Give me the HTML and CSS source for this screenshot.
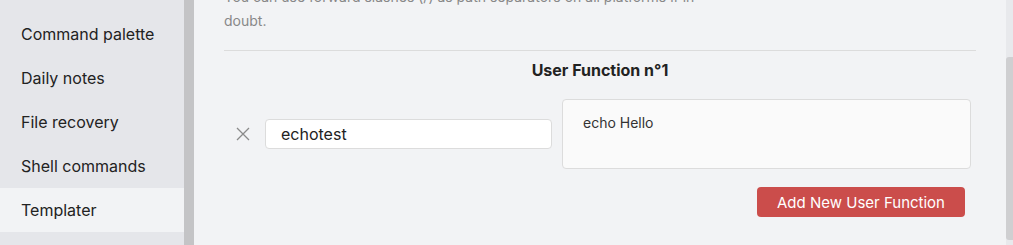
FILE: index.html
```html
<!DOCTYPE html>
<html lang="en">
<head>
    <meta charset="UTF-8">
    <title>Templater settings</title>
    <link rel="stylesheet" href="styles.css">
</head>
<body>
    <div class="app">
        <nav class="sidebar">
            <div class="nav-item">Command palette</div>
            <div class="nav-item">Daily notes</div>
            <div class="nav-item">File recovery</div>
            <div class="nav-item">Shell commands</div>
            <div class="nav-item active">Templater</div>
        </nav>
        <div class="splitter"></div>
        <main class="content">
            <p class="desc">You can use forward slashes (/) as path separators on all platforms if in<br>doubt.</p>
            <hr class="divider">
            <h3 class="func-title">User Function n°1</h3>
            <div class="func-row">
                <span class="remove">
                    <svg width="16" height="16" viewBox="0 0 16 16"><path d="M2 2L14 14M14 2L2 14" stroke="#8a8a8a" stroke-width="1.3" fill="none"/></svg>
                </span>
                <input class="func-name" type="text" value="echotest">
                <textarea class="func-cmd">echo Hello</textarea>
            </div>
            <div class="actions">
                <button class="add-btn">Add New User Function</button>
            </div>
        </main>
        <div class="scrollbar"><div class="thumb"></div></div>
    </div>
</body>
</html>
```

FILE: styles.css
```css
body {
    margin: 0;
    font-family: Inter, "Noto Sans", sans-serif;
    background-color: #f2f3f5;
    overflow: hidden;
}
.app {
    display: flex;
    height: 245px;
}
.sidebar {
    width: 184px;
    background-color: #e5e6ea;
    padding-top: 12px;
    box-sizing: border-box;
}
.nav-item {
    height: 44px;
    line-height: 44px;
    padding-left: 21px;
    font-size: 16px;
    color: #222;
}
.nav-item.active {
    background-color: #f2f3f5;
}
.splitter {
    width: 10px;
    background-color: #c4c4c6;
}
.content {
    flex: 1;
    padding: 0 30px 0 30px;
    background-color: #f2f3f5;
}
.desc {
    margin: -15px 0 0 0;
    font-size: 14px;
    line-height: 24px;
    color: #888;
}
.divider {
    border: none;
    border-top: 1px solid #dcdcdc;
    margin: 17px 0 0 0;
}
.func-title {
    margin: 9px 0 0 0;
    font-size: 16px;
    font-weight: 700;
    color: #222;
    text-align: center;
    line-height: 20px;
}
.func-row {
    display: flex;
    align-items: center;
    margin-top: 19px;
    padding-left: 10px;
}
.remove {
    display: flex;
    width: 18px;
    justify-content: center;
    margin-right: 13px;
}
.func-name {
    width: 287px;
    height: 30px;
    box-sizing: border-box;
    border: 1px solid #dcdcdc;
    border-radius: 4px;
    background-color: #fff;
    padding: 0 15px;
    font-family: Inter, "Noto Sans", sans-serif;
    font-size: 16px;
    color: #222;
    margin-right: 10px;
}
.func-cmd {
    width: 409px;
    height: 70px;
    box-sizing: border-box;
    border: 1px solid #dcdcdc;
    border-radius: 4px;
    background-color: #fafafa;
    padding: 14px 20px;
    font-family: Inter, "Noto Sans", sans-serif;
    font-size: 14px;
    color: #333;
    resize: none;
}
.actions {
    display: flex;
    justify-content: flex-end;
    padding-right: 11px;
    margin-top: 18px;
}
.add-btn {
    width: 208px;
    height: 30px;
    border: none;
    border-radius: 4px;
    background-color: #cb4d4b;
    color: #fff;
    font-family: Inter, "Noto Sans", sans-serif;
    font-size: 15px;
}
.scrollbar {
    width: 7px;
    background-color: #e8e9ec;
    display: flex;
    flex-direction: column;
    justify-content: flex-end;
    padding-bottom: 5px;
}
.thumb {
    height: 183px;
    background-color: #cfcfd1;
    border-radius: 3px 0 0 3px;
}
```
